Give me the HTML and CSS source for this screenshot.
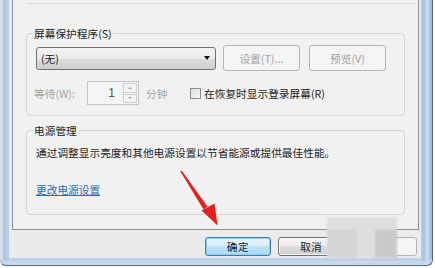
FILE: index.html
```html
<!DOCTYPE html>
<html lang="zh-CN">
<head>
<meta charset="utf-8">
<link rel="stylesheet" href="styles.css">
</head>
<body>
<div class="window">
  <div class="client">
    <div class="panel">
      <div class="topline"></div>
      <fieldset class="group group-saver">
        <legend>屏幕保护程序(S)</legend>
        <div class="row row-select">
          <div class="combo"><span class="combo-text">(无)</span><span class="combo-arrow"></span></div>
          <button class="btn btn-disabled btn-wide">设置(T)...</button>
          <button class="btn btn-disabled btn-wide">预览(V)</button>
        </div>
        <div class="row row-wait">
          <span class="label-wait">等待(W):</span>
          <div class="spin">
            <span class="spin-value">1</span>
            <span class="spin-btns"><span class="spin-btn spin-up"></span><span class="spin-btn spin-down"></span></span>
          </div>
          <span class="label-min">分钟</span>
          <label class="check"><span class="check-box"></span>在恢复时显示登录屏幕(R)</label>
        </div>
      </fieldset>
      <fieldset class="group group-power">
        <legend>电源管理</legend>
        <p class="power-desc">通过调整显示亮度和其他电源设置以节省能源或提供最佳性能。</p>
        <a class="power-link">更改电源设置</a>
      </fieldset>
    </div>
    <div class="actions">
      <button class="btn btn-default">确定</button>
      <button class="btn">取消</button>
      <button class="btn btn-disabled btn-apply">应用</button>
    </div>
  </div>
</div>
<div class="watermark">
  <span class="wm-a"></span><span class="wm-b"></span><span class="wm-c"></span>
</div>
<svg class="arrow" width="435" height="268" viewBox="0 0 435 268">
  <polygon points="181.6,170.6 180.4,171.4 203.4,209.3 207.6,206.7" fill="#e3211f"/>
  <polygon points="201.5,210.5 214.5,203.5 217.5,225.5" fill="#e3211f"/>
</svg>
</body>
</html>
```
FILE: styles.css
```css
* { box-sizing: border-box; }
html, body { margin: 0; padding: 0; }
body {
  width: 435px;
  height: 268px;
  overflow: hidden;
  background: #ffffff;
  position: relative;
  font-family: "Noto Sans CJK SC", "Noto Sans", sans-serif;
  font-size: 10.7px;
  line-height: 15px;
  color: #1b1b1b;
}
.window {
  width: 433px;
  height: 266px;
  padding: 0 11px 7px 9px;
  background: linear-gradient(90deg, #d7e1ec 0, #d7e1ec 3px, #a9c3e1 3px, #bcd2ea 9px, #bcd2ea 420px, #a6c1e2 424px, #cfe0f2 427px, #9fbbdd 431px);
  border-right: 1px solid #56687c;
  border-bottom: 1px solid #56687c;
  border-bottom-left-radius: 6px;
  border-bottom-right-radius: 6px;
  box-shadow: inset 0 -4px 0 #c9d8e8;
}
.client {
  height: 258px;
  background: #ebebeb;
  display: flex;
  flex-direction: column;
}
.panel {
  margin: 0 2px 0 3px;
  height: 230px;
  background: #f1f1f1;
  border: 1px solid #8d9095;
  border-top: none;
  padding: 0 13px;
}
.topline {
  height: 4px;
  border-bottom: 1px solid #d9d9d9;
  margin: 0 -10px 0 1px;
}
.group {
  margin: 22px 0 0;
  padding: 0 9px 10px;
  border: 1px solid #d3d7da;
  border-radius: 4px;
  min-width: 0;
}
.group legend {
  margin-left: -3px;
  padding: 0 1px;
  line-height: 15px;
  color: #1b1b1b;
}
.row { display: flex; align-items: center; }
.row-select { margin-top: 4px; height: 26px; }
.combo {
  width: 182px;
  height: 23px;
  border: 1px solid #717171;
  border-radius: 3px;
  background: linear-gradient(#f3f3f3 0, #ebebeb 50%, #dddddd 50%, #cfcfcf 100%);
  display: flex;
  align-items: center;
  justify-content: space-between;
  padding: 0 5px 0 4px;
  margin-right: 7px;
}
.combo-arrow {
  width: 0; height: 0;
  border-left: 3.5px solid transparent;
  border-right: 3.5px solid transparent;
  border-top: 4px solid #111;
}
.btn {
  font-family: inherit;
  font-size: 10.7px;
  line-height: 15px;
  width: 66px;
  height: 19px;
  padding: 0;
  border: 1px solid #707070;
  border-radius: 3px;
  background: linear-gradient(#f4f4f4 0, #ececec 50%, #dcdcdc 50%, #d0d0d0 100%);
  color: #1b1b1b;
  box-shadow: inset 0 0 0 1px rgba(255,255,255,0.7);
}
.btn-wide { width: 78px; height: 26px; margin-right: 9px; }
.btn-disabled {
  background: #f4f4f4;
  border-color: #b2b5b8;
  color: #a3a3a3;
  box-shadow: none;
}
.btn-default {
  border-color: #3d7bad;
  background: linear-gradient(#e8f5fc 0, #d9effb 50%, #bee4f6 50%, #a9d9f2 100%);
  box-shadow: inset 0 0 0 1px #84d3f2;
  letter-spacing: 0.5px;
}
.row-wait { margin-top: 10px; height: 24px; }
.label-wait {
  width: 53px;
  margin-left: -2px;
  color: #a3a3a3;
}
.spin {
  width: 52px;
  height: 24px;
  border: 1px solid #c3c5c7;
  background: #f4f4f4;
  display: flex;
  align-items: stretch;
  justify-content: flex-end;
  padding: 1px;
}
.spin-value {
  align-self: center;
  margin-right: 8px;
  color: #555;
  font-family: "Liberation Sans", sans-serif;
  font-size: 12px;
}
.spin-btns {
  width: 14px;
  display: flex;
  flex-direction: column;
  gap: 1px;
}
.spin-btn {
  flex: 1;
  border: 1px solid #cfd1d3;
  background: #f2f2f2;
  display: flex;
  align-items: center;
  justify-content: center;
}
.spin-btn::after {
  content: "";
  width: 0; height: 0;
  border-left: 2px solid transparent;
  border-right: 2px solid transparent;
}
.spin-up::after { border-bottom: 2px solid #a8a8a8; }
.spin-down::after { border-top: 2px solid #a8a8a8; }
.label-min {
  margin-left: 7px;
  width: 44px;
  color: #a3a3a3;
}
.check {
  display: flex;
  align-items: center;
  color: #1b1b1b;
}
.check-box {
  width: 11px;
  height: 11px;
  border: 1px solid #8e8f8f;
  background: linear-gradient(135deg, #dcdcdc, #f7f7f7);
  margin-right: 3px;
}
.group-power { margin-top: 7px; padding-bottom: 17px; }
.power-desc { margin: 7px 0 0; }
.power-link {
  display: inline-block;
  margin-top: 22px;
  color: #1a6fae;
  text-decoration: underline;
}
.actions {
  display: flex;
  justify-content: flex-end;
  gap: 7px;
  margin-top: 7px;
  padding-right: 4px;
}
.watermark {
  position: absolute;
  left: 327px;
  top: 217px;
  width: 70px;
  height: 41px;
  display: flex;
  background: #dedede;
  filter: blur(1px);
}
.watermark span { display: block; }
.wm-a { width: 30px; margin-top: 13px; background: #d5d5d5; }
.wm-b { width: 18px; margin-top: 13px; background: #dedede; }
.wm-c { width: 22px; margin-top: 13px; background: #c9c9c9; }
.arrow {
  position: absolute;
  left: 0;
  top: 0;
  pointer-events: none;
}
```
